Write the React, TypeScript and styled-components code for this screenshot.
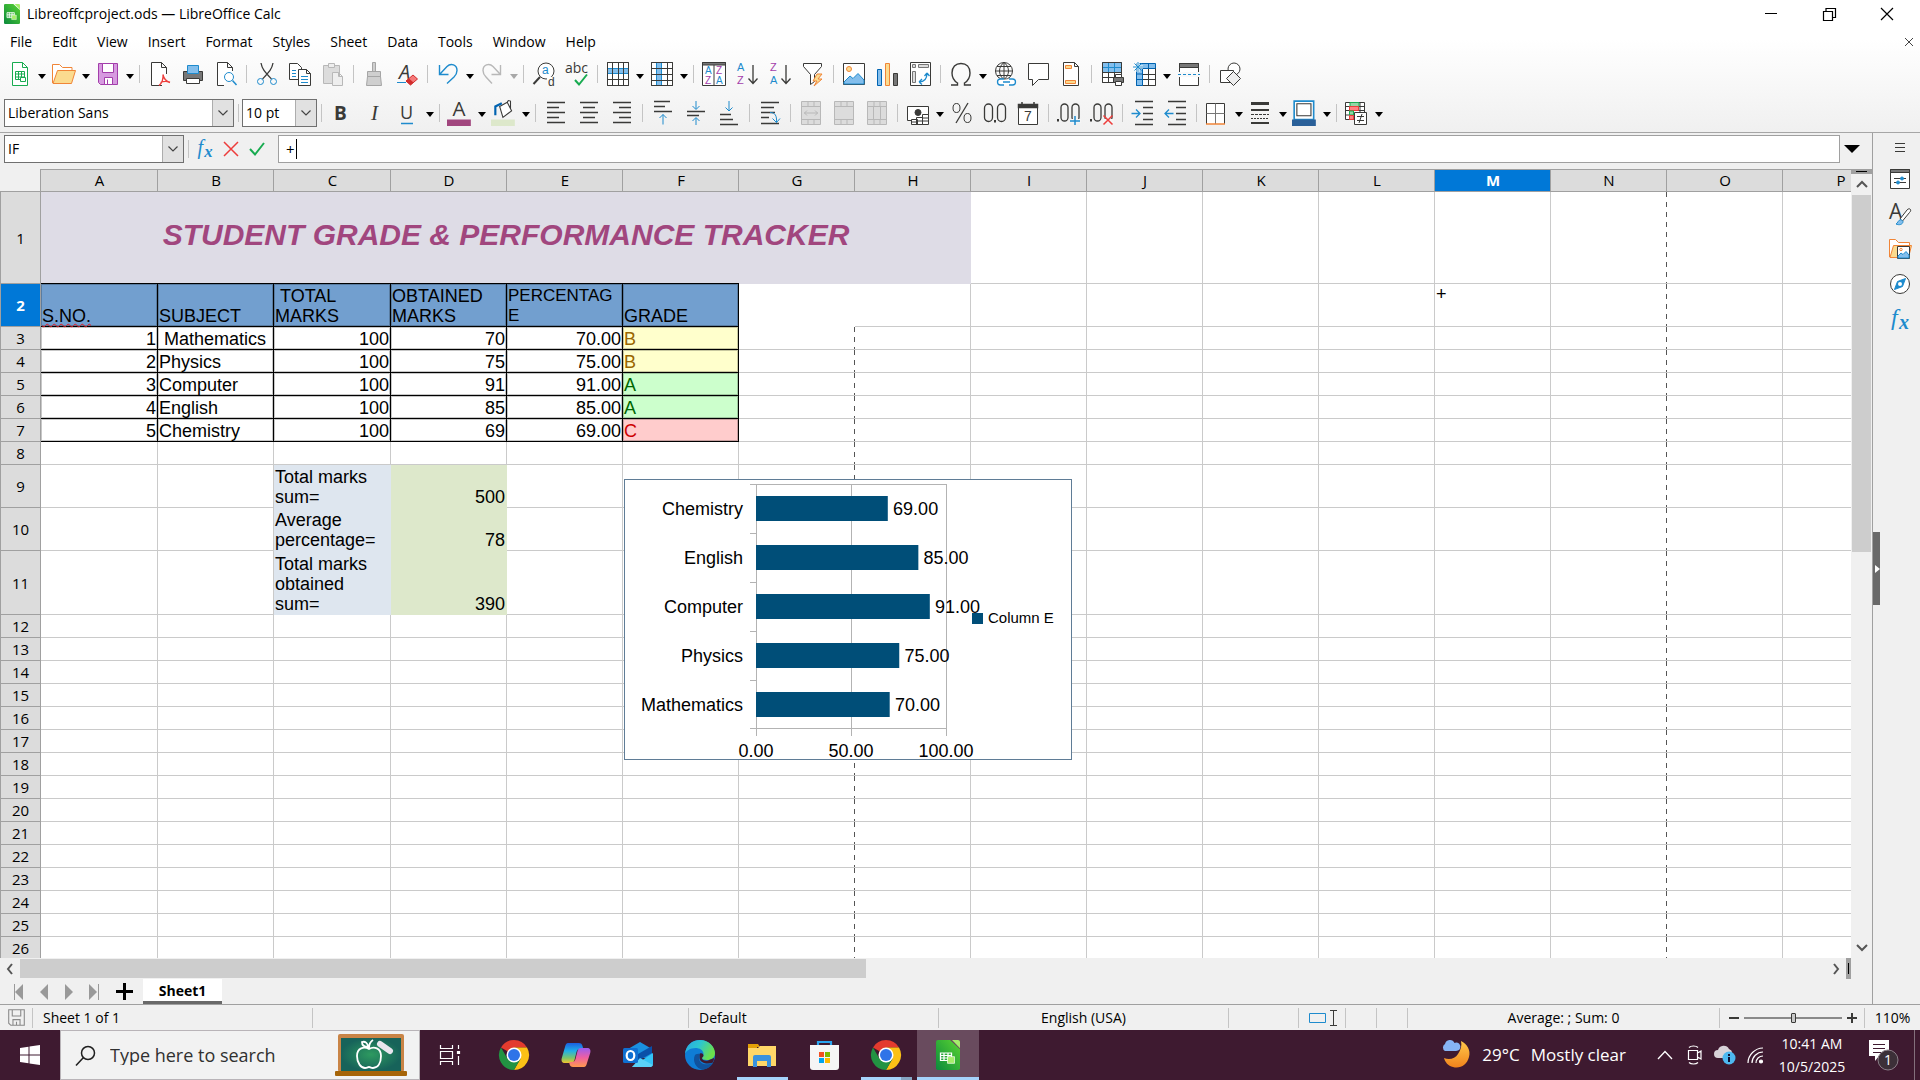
import React from "react";
import styled, { createGlobalStyle, css } from "styled-components";

const UI = `"Open Sans", "Noto Sans", sans-serif`;
const SHEET = `"Liberation Sans", Arial, sans-serif`;

const K = "#3a3a38";
const B = "#1e8bcd";
const G = "#18ab50";
const O = "#f08537";
const Y = "#fbdb8f";
const P = "#a33eab";
const LG = "#b8b8b8";
const RED = "#ed3d3b";

const Global = createGlobalStyle`
  * { box-sizing: border-box; }
  html, body, #root { height: 100%; margin: 0; }
  body { font: 15px/20px ${UI}; color: #000; background: #f0f0f0; overflow: hidden; }
  button { border: 0; padding: 0; margin: 0; background: none; font: inherit; color: inherit; }
  input, select { font: inherit; color: inherit; border: 0; padding: 0; margin: 0; background: none; outline: none; }
  svg { display: block; overflow: visible; }
`;

/* ---------- layout ---------- */
const Page = styled.div`
  height: 100vh;
  display: flex;
  flex-direction: column;
`;
const Top = styled.header`
  flex: none;
  display: flex;
  flex-direction: column;
  background: linear-gradient(#fff 30%, #f0f0f0);
  border-bottom: 1px solid #a6a6a6;
`;
const TitleBar = styled.div`
  height: 28px;
  display: flex;
  align-items: center;
  padding: 0 4px;
  gap: 7px;
`;
const Caption = styled.h1`
  flex: 1;
  margin: 0;
  font-size: 14px;
  font-weight: 400;
`;
const WinButtons = styled.div`
  display: flex;
`;
const WinButton = styled.button`
  width: 58px;
  height: 28px;
  display: grid;
  place-items: center;
`;
const MenuBar = styled.nav`
  height: 27px;
  display: flex;
  align-items: center;
`;
const MenuItem = styled.button`
  padding: 0 10px;
  font-size: 14px;
`;
const CloseDoc = styled.button`
  margin-left: auto;
  width: 22px;
  height: 22px;
  display: grid;
  place-items: center;
`;
const Toolbar = styled.div<{ $format?: boolean }>`
  height: ${(p) => (p.$format ? 39 : 38)}px;
  display: flex;
  align-items: center;
  padding-left: ${(p) => (p.$format ? 4 : 3)}px;
`;
const Tool = styled.button`
  width: 33px;
  height: 32px;
  flex: none;
  display: grid;
  place-items: center;
`;
const DropArrow = styled.button<{ $off?: boolean }>`
  width: 11px;
  height: 32px;
  flex: none;
  display: grid;
  place-items: center;
  padding-top: 4px;
  &::before {
    content: "";
    border: 4px solid transparent;
    border-top: 5px solid ${(p) => (p.$off ? "#a8a8a8" : "#000")};
    border-bottom: 0;
  }
`;
const Divider = styled.span`
  width: 8px;
  flex: none;
  height: 18px;
  background: linear-gradient(#c4c4c4, #c4c4c4) center / 1px 100% no-repeat;
`;
const Combo = styled.label<{ $w: number }>`
  position: relative;
  width: ${(p) => p.$w}px;
  height: 28px;
  flex: none;
  display: flex;
  background: #fff;
  border: 1px solid #707070;
  input {
    flex: 1;
    min-width: 0;
    width: 100%;
    padding-left: 3px;
    font-size: 14px;
  }
`;
const ComboArrow = styled.span`
  width: 21px;
  flex: none;
  display: grid;
  place-items: center;
  background: #e1e1e1;
  border-left: 1px solid #adadad;
`;

const Workspace = styled.div`
  flex: 1;
  min-height: 0;
  display: flex;
`;
const DocArea = styled.main`
  flex: 1;
  min-width: 0;
  display: flex;
  flex-direction: column;
`;
const FormulaBar = styled.div`
  height: 36px;
  flex: none;
  display: flex;
  align-items: center;
  padding: 0 8px 4px 4px;
`;
const FxTools = styled.div`
  display: flex;
  width: 77px;
  justify-content: space-between;
  margin-right: 9px;
`;
const FxButton = styled.button`
  width: 25px;
  height: 26px;
  display: grid;
  place-items: center;
`;
const FormulaField = styled.label`
  flex: 1;
  height: 28px;
  display: flex;
  align-items: center;
  padding-left: 7px;
  background: #fff;
  border: 1px solid #a0a0a0;
  input {
    width: 10px;
    font-size: 15px;
  }
`;
const Caret = styled.span`
  width: 1px;
  height: 20px;
  background: #000;
`;
const Expand = styled.button`
  width: 24px;
  height: 28px;
  display: grid;
  place-items: center;
  &::before {
    content: "";
    border: 8px solid transparent;
    border-top: 8px solid #000;
    border-bottom: 0;
  }
`;

const GridFrame = styled.div`
  flex: 1;
  min-height: 0;
  display: flex;
`;
const GridView = styled.div`
  position: relative;
  flex: 1;
  min-width: 0;
  overflow: hidden;
  background: #fff;
`;
const VScroll = styled.div`
  width: 21px;
  flex: none;
  display: flex;
  flex-direction: column;
  align-items: flex-end;
  background: #f0f0f0;
`;
const SplitHandle = styled.span`
  width: 21px;
  height: 5px;
  display: grid;
  place-items: center;
  background: #a0a0a0;
  &::before {
    content: "";
    width: 11px;
    height: 1px;
    background: #000;
  }
`;
const ScrollArrow = styled.button`
  width: 20px;
  height: 20px;
  flex: none;
  display: grid;
  place-items: center;
`;
const VTrack = styled.div`
  flex: 1;
  width: 20px;
  padding-top: 1px;
`;
const VThumb = styled.div`
  width: 19px;
  height: 48%;
  background: #cdcdcd;
`;
const HScroll = styled.div`
  height: 21px;
  flex: none;
  display: flex;
  align-items: center;
  padding-right: 21px;
`;
const HTrack = styled.div`
  flex: 1;
  height: 19px;
  display: grid;
  grid-template-columns: 846fr 959fr;
`;
const HThumb = styled.div`
  height: 19px;
  background: #cdcdcd;
`;
const HSplit = styled.span`
  width: 5px;
  height: 21px;
  display: grid;
  place-items: center;
  background: #a0a0a0;
  &::before {
    content: "";
    width: 1px;
    height: 11px;
    background: #000;
  }
`;
const TabBar = styled.div`
  height: 25px;
  flex: none;
  display: flex;
  padding-left: 6px;
`;
const TabNav = styled.button`
  width: 25px;
  height: 25px;
  display: grid;
  place-items: center;
`;
const AddTab = styled.button`
  width: 37px;
  height: 25px;
  display: grid;
  place-items: center;
`;
const SheetTab = styled.button`
  width: 79px;
  height: 25px;
  padding-top: 2px;
  background: #fff;
  border-bottom: 3px solid #696969;
  font-size: 14px;
  font-weight: 700;
`;

/* ---------- sidebar ---------- */
const Sidebar = styled.aside`
  width: 48px;
  flex: none;
  display: flex;
  border-left: 1px solid #a0a0a0;
`;
const DeckHandle = styled.button`
  width: 7px;
  height: 73px;
  margin-top: 399px;
  display: grid;
  place-items: center;
  background: #696969;
`;
const DeckButtons = styled.div`
  flex: 1;
  display: flex;
  flex-direction: column;
  align-items: center;
`;
const DeckButton = styled.button`
  width: 34px;
  height: 35px;
  display: grid;
  place-items: center;
  &:first-child {
    height: 28px;
  }
`;

/* ---------- sheet ---------- */
const Sheet = styled.table`
  table-layout: fixed;
  width: 1899px;
  border-spacing: 0;
  font: 18px/20px ${SHEET};
`;
const ColHead = styled.th<{ $active?: boolean }>`
  height: 23px;
  padding: 0 0 1px 1px;
  border: solid #a0a0a0;
  border-width: 1px 1px 1px 0;
  font: ${(p) => (p.$active ? 700 : 400)} 15px/18px ${UI};
  background: ${(p) => (p.$active ? "#0078d7" : "#dcdcdc")};
  color: ${(p) => (p.$active ? "#fff" : "#000")};
`;
const Corner = styled.td`
  padding: 0;
  background: #f0f0f0;
  border: solid #a0a0a0;
  border-width: 0 1px 1px 0;
`;
const RowHead = styled.th<{ $active?: boolean }>`
  padding: 0;
  border: solid #a0a0a0;
  border-width: 0 1px 1px 1px;
  font: ${(p) => (p.$active ? 700 : 400)} 15px/20px ${UI};
  background: ${(p) => (p.$active ? "#0078d7" : "#dcdcdc")};
  color: ${(p) => (p.$active ? "#fff" : "#000")};
`;
const Row = styled.tr<{ $h: number }>`
  height: ${(p) => p.$h}px;
`;
type CellKind = "plain" | "boxed" | "open" | "fill" | "break";
const Cell = styled.td<{
  $kind?: CellKind;
  $bg?: string;
  $fg?: string;
  $right?: boolean;
  $top?: boolean;
  $small?: boolean;
}>`
  padding: 0 1px;
  vertical-align: ${(p) => (p.$top ? "top" : "bottom")};
  text-align: ${(p) => (p.$right ? "right" : "left")};
  white-space: pre-wrap;
  color: ${(p) => p.$fg ?? "#000"};
  background-color: ${(p) => p.$bg ?? "#fff"};
  border: solid #cacaca;
  border-width: 0 1px 1px 0;
  ${(p) => p.$small && css`font-size: 17px;`}
  ${(p) =>
    p.$kind === "boxed" &&
    css`
      border-color: #000;
      box-shadow: inset 0 0 0 1px rgba(0, 0, 0, 0.22);
    `}
  ${(p) => p.$kind === "open" && css`border-color: #fff;`}
  ${(p) => p.$kind === "fill" && css`border-color: ${p.$bg};`}
  ${(p) =>
    p.$kind === "break" &&
    css`
      border-right: 0;
      background: repeating-linear-gradient(#555 0 5px, #fff 5px 10px) right / 1px 100% no-repeat #fff;
    `}
`;
const TopRule = styled(Cell)`
  box-shadow: inset 0 0 0 1px rgba(0, 0, 0, 0.22), 0 -1px 0 #000;
`;
const TitleCell = styled.td`
  padding: 0 0 6px;
  background: #dedce6;
  color: #a1467e;
  text-align: center;
  vertical-align: middle;
  font: italic 700 30px/40px ${SHEET};
  white-space: nowrap;
`;
const Misspelt = styled.span`
  text-decoration: underline wavy #e01b24 1px;
  text-underline-offset: 1px;
`;
const ChartBox = styled.figure`
  position: absolute;
  left: 624px;
  top: 310px;
  margin: 0;
  width: 448px;
  height: 281px;
  background: #fff;
  border: 1px solid #5f7c96;
  font: 18px ${SHEET};
`;

/* ---------- status bar ---------- */
const StatusBar = styled.footer`
  height: 26px;
  flex: none;
  display: grid;
  grid-template-columns: 33px 280fr 376fr 250fr 290fr 70px 47px 31px 31px 312fr 145px 55px;
  align-items: center;
  border-top: 1px solid #a0a0a0;
  font-size: 14px;
`;
const StatusCell = styled.div<{ $center?: boolean }>`
  height: 20px;
  display: flex;
  align-items: center;
  justify-content: ${(p) => (p.$center ? "center" : "flex-start")};
  padding-left: ${(p) => (p.$center ? 0 : 10)}px;
  border-right: 1px solid #c4c4c4;
  white-space: nowrap;
  &:last-child {
    border: 0;
  }
`;
const ZoomCell = styled(StatusCell)`
  padding: 0 4px 0 6px;
`;
const ZoomButton = styled.button`
  width: 16px;
  height: 18px;
  flex: none;
  display: grid;
  place-items: center;
`;
const ZoomRange = styled.input`
  flex: 1;
  min-width: 0;
  margin: 0 2px;
  height: 18px;
  appearance: none;
  background: linear-gradient(#8a8a8a, #8a8a8a) center / 100% 2px no-repeat;
  &::-webkit-slider-thumb {
    appearance: none;
    width: 5px;
    height: 10px;
    border: 1px solid #3a3a38;
    border-radius: 1px;
    background: #c8c8c8;
  }
`;

/* ---------- task bar ---------- */
const TaskBar = styled.footer`
  height: 50px;
  flex: none;
  display: flex;
  background: #3e1a30;
  color: #fff;
`;
const Start = styled.button`
  width: 60px;
  display: grid;
  place-items: center;
`;
const Search = styled.label`
  width: 360px;
  display: flex;
  align-items: center;
  padding: 0 12px 0 14px;
  background: #f2f2f2;
  border: 1px solid #b9b4b8;
  color: #1f1f1f;
  font-size: 18px;
  input {
    flex: 1;
    min-width: 0;
    padding-left: 14px;
  }
  input::placeholder {
    color: #303030;
    opacity: 1;
  }
`;
const Apps = styled.div`
  flex: 1;
  display: flex;
`;
const AppButton = styled.button<{ $state?: "open" | "many" | "active" }>`
  position: relative;
  width: 62px;
  display: grid;
  place-items: center;
  background: ${(p) => (p.$state === "active" ? "#694b5e" : "none")};
  &:first-child {
    width: 63px;
    padding-right: 4px;
  }
  ${(p) =>
    p.$state &&
    css`
      &::after {
        content: "";
        position: absolute;
        left: ${p.$state === "active" ? 0 : 6}px;
        right: ${p.$state === "active" ? 0 : 5}px;
        bottom: 0;
        height: 3px;
        background: ${p.$state === "many" ? "linear-gradient(90deg, #a5d3fb 78%, #86a4c2 78%)" : "#a5d3fb"};
      }
    `}
`;
const Weather = styled.button`
  display: flex;
  align-items: center;
  gap: 11px;
  margin-right: 24px;
  font-size: 17px;
`;
const TrayButton = styled.button`
  width: 30px;
  display: grid;
  place-items: center;
`;
const Clock = styled.time`
  width: 84px;
  display: flex;
  flex-direction: column;
  align-items: center;
  justify-content: center;
  font-size: 14px;
  line-height: 23px;
`;
const Notify = styled.button`
  width: 60px;
  display: grid;
  place-items: center;
`;
const ShowDesktop = styled.button`
  width: 6px;
  border-left: 1px solid #83707c;
`;

/* ---------- icons ---------- */
const Ico = ({ children, s = 24 }: { children: React.ReactNode; s?: number }) => (
  <svg width={s} height={s} viewBox="0 0 24 24" fill="none" stroke={K} aria-hidden="true">
    {children}
  </svg>
);
const Chevron = () => (
  <svg width="12" height="8" viewBox="0 0 12 8" fill="none" stroke="#444" strokeWidth="1.2">
    <path d="M1.500 1.500 6 6l4.500-4.500" />
  </svg>
);
const T = (p: React.SVGProps<SVGTextElement>) => <text stroke="none" fontFamily="Open Sans" {...p} />;
const L = (p: React.SVGProps<SVGTextElement>) => (
  <text stroke="none" fontFamily="Liberation Sans" fontSize="10" {...p} />
);

const mergeGrid = (mid: string) => (
  <Ico>
    <path fill="#dcdcdc" stroke={LG} d="M2.500.5h19v23h-19z" />
    <path stroke={LG} d={"M2.500 5.500h19M2.500 18.500h19M9 .5v5M15 .5v5M9 18.500v5M15 18.500v5" + mid} />
  </Ico>
);

const icons: Record<string, React.ReactNode> = {
  new: (
    <Ico>
      <path fill="#fff" stroke={G} d="M4.500.5h10l5 5v18h-15z" />
      <path stroke={G} d="M14.500.5v5h5" />
      <path fill="#fff" stroke={G} d="M7.500 9.500h9v8h-9zM7.500 12h9M7.500 15h9M10.500 9.500v8M13.500 9.500v8" />
      <path fill="#fff" stroke={G} d="M12.500 15.500h5v4h-5z" />
    </Ico>
  ),
  open: (
    <Ico>
      <path stroke={O} fill="#fff" d="M.5 21V2.500h7l3 3h9.500v3" />
      <path stroke={O} fill={Y} d="M1 21.500 5.500 8.500h18l-4 13z" />
    </Ico>
  ),
  save: (
    <Ico>
      <path stroke={P} fill="#d79ae0" d="M2.500 1.500h19v21h-17l-2-2z" />
      <path stroke={P} fill="#fff" d="M6.500 1.500h11v9h-11zM8.500 15.500h8v7h-8z" />
      <path stroke={P} d="M11.500 17.500v5" />
    </Ico>
  ),
  pdf: (
    <Ico>
      <path fill="#fff" d="M14 23.500H3.500V.5h10l5 5V12M13.500.5v5h5" />
      <path stroke={RED} strokeWidth="1.300" d="M11 23.500c3-2 4.500-7 4-11M15 12.500c1 5 3 7 7 8M12.500 20.500c3-1.500 6-1.500 9.500-.5" />
    </Ico>
  ),
  print: (
    <Ico>
      <path fill="#777" d="M2.500 9.500h19v9h-19z" />
      <path stroke={B} fill="#83beec" d="M6.500 3.500h11v8h-11z" />
      <path fill="#fff" d="M5.500 16.500h13v5h-13z" />
    </Ico>
  ),
  preview: (
    <Ico>
      <path fill="#fff" d="M10 23.500H3.500V.5h10l5 5V9M13.500.5v5h5" />
      <circle cx="15" cy="15" r="4.500" stroke={B} fill="#fff" />
      <path stroke={B} strokeWidth="1.500" d="m18.500 18.500 4 4.500" />
    </Ico>
  ),
  cut: (
    <Ico>
      <path strokeWidth="1.300" d="M6 1c1 6 4 9 10.500 16M18 1c-1 6-4 9-10.500 16" />
      <circle cx="5.500" cy="19.500" r="3" stroke={B} />
      <circle cx="18.500" cy="19.500" r="3" stroke={B} />
    </Ico>
  ),
  copy: (
    <Ico>
      <path fill="#fff" d="M1.500 1.500h8l4 4v12h-12z" />
      <path fill="#fff" d="M10.500 7.500h8l4 4v12h-12zM18.500 7.500v4h4" />
      <path stroke={B} d="M4 8.500h4M4 11.500h4M4 14.500h4M13 14.500h7M13 17.500h7M13 20.500h7" />
    </Ico>
  ),
  paste: (
    <Ico>
      <path stroke={LG} fill="#dcdcdc" d="M2.500 3.500h16v18h-16z" />
      <path stroke={LG} fill="#eee" d="M7.500 1.500h6v4h-6zM11.500 10.500h6l4 4v9h-10zM17.500 10.500v4h4" />
    </Ico>
  ),
  brush: (
    <Ico>
      <path stroke="#a5a5a5" fill="#cfcfcf" d="M10.500.5h3v9h-3zM5.500 9.500h13v5h-13zM5.500 14.500h13l1 9h-15z" />
    </Ico>
  ),
  clear: (
    <Ico>
      <T x="4" y="17" fontSize="20" fontStyle="italic" fill={K}>A</T>
      <path stroke={B} d="M2 20.500h9" />
      <path stroke="#d12c2c" fill="#f57a7a" d="m11 19 7-6 4.500 4-7 6z" />
      <path fill="#d12c2c" stroke="none" d="m11 19 3-2.500 4.500 4-3 2.500z" />
    </Ico>
  ),
  undo: (
    <Ico>
      <path stroke={B} strokeWidth="1.400" d="M3.500 3v9.500h9M4 12 11 4.500c4-4 10-1.500 10 4 0 3-1.500 5-3 6.500l-7 6.500" />
    </Ico>
  ),
  redo: (
    <Ico>
      <path stroke={LG} strokeWidth="1.400" d="M20.500 3v9.500h-9M20 12 13 4.500c-4-4-10-1.500-10 4 0 3 1.500 5 3 6.500l6 6.500" />
    </Ico>
  ),
  find: (
    <Ico>
      <circle cx="14" cy="9" r="8" fill="#fff" />
      <path strokeWidth="2" d="m8 15-6.500 7" />
      <path stroke="#fff" strokeWidth="3" d="M15 16.500h7" />
      <L x="10" y="12" fontSize="12" fill={B}>a</L>
      <L x="16" y="24" fontSize="12" fill={K}>d</L>
    </Ico>
  ),
  spell: (
    <Ico>
      <T x="0" y="11" fontSize="14" fill={K}>abc</T>
      <path stroke={G} strokeWidth="2" d="m10 18 4 4.500 8-10" />
    </Ico>
  ),
  rows: (
    <Ico>
      <path fill="#fff" d="M1.500.5h21v23h-21z" />
      <path fill="#83beec" stroke={B} d="M1.500 6.500h21v5h-21z" />
      <path d="M1.500.5h21v23h-21zM1.500 17.500h21M6.500.5v23M12.500.5v23M17.500.5v23" />
    </Ico>
  ),
  cols: (
    <Ico>
      <path fill="#fff" d="M1.500.5h21v23h-21z" />
      <path fill="#83beec" stroke={B} d="M6.500.5h5v23h-5z" />
      <path d="M1.500.5h21v23h-21zM1.500 6.500h21M1.500 12.500h21M1.500 18.500h21M17.500.5v23" />
    </Ico>
  ),
  sort: (
    <Ico>
      <path fill="#fff" d="M.5.5h23v23H.5zM12 3v20" />
      <path fill="#777" d="M.5.500h23v2.500H.5z" />
      <L x="3" y="12" fill={B}>A</L>
      <L x="3" y="22" fill={P}>Z</L>
      <L x="14" y="12" fill={P}>Z</L>
      <L x="14" y="22" fill={B}>A</L>
    </Ico>
  ),
  az: (
    <Ico>
      <L x="2" y="9" fontSize="11" fill={B}>A</L>
      <L x="2" y="22" fontSize="11" fill={P}>Z</L>
      <path strokeWidth="1.300" d="M18 3v18M13.500 16.500 18 21.500l4.500-5" />
    </Ico>
  ),
  za: (
    <Ico>
      <L x="2" y="9" fontSize="11" fill={P}>Z</L>
      <L x="2" y="22" fontSize="11" fill={B}>A</L>
      <path strokeWidth="1.300" d="M18 3v18M13.500 16.500 18 21.500l4.500-5" />
    </Ico>
  ),
  filter: (
    <Ico>
      <path fill="#fff" d="M2.500 1.500h18v3l-7 8v7l-4 3v-10l-7-8z" />
      <path stroke={O} fill={Y} d="m16 12-4 7h4l-3 5 8-7h-4l4-5z" />
    </Ico>
  ),
  image: (
    <Ico>
      <path fill="#fff" d="M1.500 1.500h21v21h-21z" />
      <circle cx="7" cy="7" r="2.500" stroke={O} fill={Y} />
      <path stroke={B} fill="#83beec" d="m2 20 6-6 3 2.500 5-5 6 6.500v4H2z" />
    </Ico>
  ),
  chart: (
    <Ico>
      <path stroke="#0063b1" fill="#83beec" d="M2.500 7.500h4v16h-4z" />
      <path stroke={O} fill={Y} d="M10.500 1.500h4v22h-4z" />
      <path fill="#777" d="M18.500 11.500h4v12h-4z" />
    </Ico>
  ),
  pivot: (
    <Ico>
      <path fill="#fff" d="M2.500.5h20v23h-20z" />
      <path fill="#ddd" stroke="#777" d="M4.500 2.500h3v3h-3zM10.500 2.500h10v3h-10zM4.500 9.500h3v11h-3z" />
      <path stroke={B} strokeWidth="1.300" d="M11 20c5 0 8-3 8-9M11 20l3-3M11 20l3 2.500M19 11l-2.500 3M19 11l2.500 3" />
    </Ico>
  ),
  omega: (
    <Ico>
      <path strokeWidth="1.400" d="M2 23h6.500v-2C4.500 18.500 3 15.500 3 11 3 5 6.500 1.500 12 1.500S21 5 21 11c0 4.500-1.500 7.500-5.500 10v2H22" />
    </Ico>
  ),
  globe: (
    <Ico>
      <circle cx="11" cy="9" r="8.500" />
      <path d="M11 .5v17M2.500 9h17M4 4.500h14M4 13.500h14M11 .5c-6 4-6 13 0 17M11 .5c6 4 6 13 0 17" />
      <path stroke="#fff" strokeWidth="5" d="M6 20h16" />
      <path stroke={B} fill="#fff" strokeWidth="1.300" d="M11 17H7.500a3 3 0 0 0 0 6H11M16 17h3.500a3 3 0 0 1 0 6H16M10 20h7" />
    </Ico>
  ),
  comment: (
    <Ico>
      <path fill="#fff" d="M2.500 1.500h20v16h-10l-6 6v-6h-4z" />
    </Ico>
  ),
  header: (
    <Ico>
      <path fill="#fff" d="M4.500.5h11l4 4v19h-15zM15.500.5v4h4" />
      <path stroke={O} fill={Y} d="M6.500 3.500h6v3h-6zM6.500 18.500h10v3h-10z" />
    </Ico>
  ),
  printarea: (
    <Ico>
      <path fill="#fff" d="M2.500.5h19v20h-19z" />
      <path fill="#83beec" stroke={B} d="M2.500.500h19v10h-19z" />
      <path d="M2.500.5h19v20h-19zM2.500 10.500h19M2.500 15.500h19M8.500 10.500v10M14.500 10.500v10" />
      <path stroke={B} d="M3 5.500h18M8.500 1v9M14.500 1v9" />
      <path fill="#777" d="M13.500 15.500h10v5h-10z" />
      <path fill="#fff" d="M15.500 12.500h6v3h-6zM15.500 19.500h6v4h-6z" />
    </Ico>
  ),
  freeze: (
    <Ico>
      <path fill="#fff" d="M3.500 3.500h19v20h-19z" />
      <path fill="#83beec" stroke="#0063b1" d="M3.500 1.500h19v5h-19zM3.500 6.500h6v17h-6z" />
      <path d="M9.500 12.500h13M9.500 17.500h13M15.500 6.500v17M22.500 6.500v17" />
      <path stroke="#0063b1" d="M3.500 12h6M3.500 17.500h6M15.500 1.500v5" />
      <path stroke="#fff" strokeWidth="3" d="M5 0v10M0 5h10" />
      <path stroke={B} d="M5 0v10M0 5h10M1.500 1.500l7 7M8.500 1.500l-7 7" />
    </Ico>
  ),
  split: (
    <Ico>
      <path fill="#fff" d="M2.500 10V1.500h19V10M2.500 15v8.500h19V15" />
      <path fill="#777" d="M2.500 1.500h19v4h-19z" />
      <path stroke={B} strokeDasharray="3 2" d="M1 12.500h22" />
    </Ico>
  ),
  shapes: (
    <Ico>
      <circle cx="16" cy="7" r="6" fill="#fff" />
      <path fill="#fff" d="M2.500 8.500h13v12h-13z" />
      <path fill="#eee" d="m15.500 9.500 7 7-7 7-7-7z" />
    </Ico>
  ),
  bold: (
    <Ico>
      <T x="4" y="19" fontSize="19" fontWeight="700" fill={K}>B</T>
    </Ico>
  ),
  italic: (
    <Ico>
      <T x="8" y="19" fontSize="21" fontStyle="italic" fontFamily="Liberation Serif" fill={K}>I</T>
    </Ico>
  ),
  underline: (
    <Ico>
      <T x="4" y="18" fontSize="18" fill={K}>U</T>
      <path stroke={B} strokeWidth="1.500" d="M5 22.500h12" />
    </Ico>
  ),
  fontcolor: (
    <Ico s={26}>
      <T x="5" y="15" fontSize="19" fill={K}>A</T>
      <path fill="#a1467e" stroke="none" d="M0 18h22v6H0z" />
    </Ico>
  ),
  fillcolor: (
    <Ico s={26}>
      <path fill="#dde8cb" stroke="none" d="M0 18h22v6H0z" />
      <path fill="#fff" d="m8 6 7-4 4 8-8 6zM15 2l1-1.500 2 .5v7" />
      <path stroke="#0063b1" strokeWidth="2" d="M4 14V6l6-3" />
    </Ico>
  ),
  alignL: <Ico><path strokeWidth="1.300" d="M3 1.500h18M3 6.500h12M3 11.500h18M3 16.500h12M3 21.500h18" /></Ico>,
  alignC: <Ico><path strokeWidth="1.300" d="M3 1.500h18M6 6.500h12M3 11.500h18M6 16.500h12M3 21.500h18" /></Ico>,
  alignR: <Ico><path strokeWidth="1.300" d="M3 1.500h18M9 6.500h12M3 11.500h18M9 16.500h12M3 21.500h18" /></Ico>,
  top: (
    <Ico>
      <path strokeWidth="1.300" d="M3 .5h16M3 5.500h11M3 10.500h18" />
      <path stroke={B} d="M12 23.500v-10M8.500 17l3.500-3.500 3.500 3.500" />
    </Ico>
  ),
  middle: (
    <Ico>
      <path strokeWidth="1.300" d="M3 10.500h18M3 14.500h12" />
      <path stroke={B} d="M12 0v8M8.500 5 12 8.500 15.500 5M12 24v-7M8.500 20l3.500-3.500 3.500 3.500" />
    </Ico>
  ),
  bottom: (
    <Ico>
      <path strokeWidth="1.300" d="M3 13.500h11M3 18.500h13M3 23.500h18" />
      <path stroke={B} d="M12 0v9.500M8.500 6.500 12 10l3.500-3.500" />
    </Ico>
  ),
  wrap: (
    <Ico>
      <path strokeWidth="1.300" d="M3 1.500h18M3 6.500h13M3 11.500h14M3 16.500h8M3 22.500h18" />
      <path stroke={B} d="M12 11.500c5 0 7 3 6.500 10M14.500 17.500l4 4 3.500-4" />
    </Ico>
  ),
  merge1: mergeGrid("M5 12h14M8 9.500 5.500 12 8 14.500M16 9.500l2.500 2.500-2.500 2.500"),
  merge2: mergeGrid(""),
  merge3: mergeGrid("M8.500 5.500v13M15.500 5.500v13"),
  currency: (
    <Ico>
      <path fill="#fff" d="M1.500 5.500h21v14h-21z" />
      <circle cx="12" cy="11.500" r="3" fill={K} />
      <path fill="#fff" d="M5.500 18.500h6v5h-6zM10.500 16.500h6v7h-6zM16.500 13.500h6v10h-6zM5.500 21h6M10.500 20h6M16.500 17h6M16.500 20h6" />
    </Ico>
  ),
  percent: (
    <Ico>
      <ellipse cx="6.500" cy="7" rx="3.500" ry="4.500" />
      <ellipse cx="17.500" cy="17" rx="3.500" ry="4.500" />
      <path strokeWidth="1.300" d="m18 2-12 20" />
    </Ico>
  ),
  decimal: (
    <Ico>
      <rect x="1.500" y="3" width="8" height="17.500" rx="4" strokeWidth="1.300" />
      <rect x="14.500" y="3" width="8" height="17.500" rx="4" strokeWidth="1.300" />
      <path strokeWidth="2" d="M12 19v2.500" />
    </Ico>
  ),
  date: (
    <Ico>
      <path fill="#fff" d="M2.500 3.500h19v20h-19z" />
      <path fill={K} d="M2.500 3.500h19v3h-19zM6 1v3M18 1v3" strokeWidth="1.500" />
      <L x="8" y="20" fontSize="14" fill={K}>7</L>
    </Ico>
  ),
  addDec: (
    <Ico>
      <path strokeWidth="2" d="M1 18v2.500" />
      <rect x="4" y="3" width="7" height="17" rx="3.500" strokeWidth="1.300" />
      <rect x="15" y="3" width="7" height="17" rx="3.500" strokeWidth="1.300" />
      <path stroke="#f5f5f5" strokeWidth="4" d="M13 20h11" />
      <path stroke={B} strokeWidth="1.500" d="M13 20h10M18 15v9" />
    </Ico>
  ),
  delDec: (
    <Ico>
      <path strokeWidth="2" d="M1 18v2.500" />
      <rect x="4" y="3" width="7" height="17" rx="3.500" strokeWidth="1.300" />
      <rect x="15" y="3" width="7" height="17" rx="3.500" strokeWidth="1.300" />
      <path stroke="#f5f5f5" strokeWidth="4" d="M13 20h11" />
      <path stroke={RED} strokeWidth="1.500" d="m13.500 14.500 9 9M22.500 14.500l-9 9" />
    </Ico>
  ),
  indent: (
    <Ico>
      <path strokeWidth="1.300" d="M4 .5h18M12 6.500h10M12 12.500h10M12 18.500h10M4 23.500h18" />
      <path stroke={B} strokeWidth="1.300" d="M.5 12.500h8M5 8.500l4 4-4 4" />
    </Ico>
  ),
  outdent: (
    <Ico>
      <path strokeWidth="1.300" d="M4 .5h18M12 6.500h10M12 12.500h10M12 18.500h10M4 23.500h18" />
      <path stroke={B} strokeWidth="1.300" d="M9.500 12.500h-8M5 8.500l-4 4 4 4" />
    </Ico>
  ),
  borders: (
    <Ico>
      <path fill="#fff" d="M1.500 23V2.500h18V23" />
      <path stroke="#777" d="M10.500 2.500V23M1.500 12.500h18" />
      <path stroke={O} strokeWidth="1.500" d="M1 23h19" />
    </Ico>
  ),
  lines: (
    <Ico>
      <path strokeWidth="3" d="M2 2.500h18" />
      <path strokeWidth="2" d="M2 9h18M2 22h18" />
      <path strokeDasharray="3 1" d="M2 13.500h18" />
      <path strokeDasharray="2 1" d="M2 17.500h18" />
    </Ico>
  ),
  linecolor: (
    <Ico s={26}>
      <path stroke={B} strokeWidth="1.500" fill="#fff" d="M2 1h18v17H2z" />
      <path d="M4.500 3.500h13v11h-13z" />
      <path fill="#2a6099" stroke="none" d="M0 18h22v6H0z" />
    </Ico>
  ),
  cond: (
    <Ico>
      <path fill="#fff" d="M.5 1.500h19v17H.5zM.5 5.500h19M.5 9.500h19M.5 14h19M15 1.500v17" />
      <path fill="#93d6a6" stroke={G} d="M5 1.500h9v4H5z" />
      <path fill="#ff8080" stroke={RED} d="M4.500 5.500h9v4h-9z" />
      <path fill="#93d6a6" stroke={G} d="M4.500 10h4v4h-4z" />
      <path fill="#ff8080" stroke={RED} d="M4.500 14.500h4v4h-4z" />
      <path fill="#fff" d="M9.500 11.500h12v12h-12zM12 15.500h7M12 19.500h7M17 13l-3 9" />
    </Ico>
  ),
};

type Item = [string, string, ("drop" | "off")?] | "|";
const standard: Item[] = [
  ["new", "New", "drop"], ["open", "Open", "drop"], ["save", "Save", "drop"], "|",
  ["pdf", "Export as PDF"], ["print", "Print"], ["preview", "Print Preview"], "|",
  ["cut", "Cut"], ["copy", "Copy"], ["paste", "Paste"], "|",
  ["brush", "Clone Formatting"], ["clear", "Clear Formatting"], "|",
  ["undo", "Undo", "drop"], ["redo", "Redo", "off"], "|",
  ["find", "Find and Replace"], ["spell", "Spelling"], "|",
  ["rows", "Row", "drop"], ["cols", "Column", "drop"], "|",
  ["sort", "Sort"], ["az", "Sort Ascending"], ["za", "Sort Descending"], ["filter", "AutoFilter"], "|",
  ["image", "Insert Image"], ["chart", "Insert Chart"], ["pivot", "Pivot Table"], "|",
  ["omega", "Special Character", "drop"], ["globe", "Hyperlink"], ["comment", "Comment"], ["header", "Headers and Footers"], "|",
  ["printarea", "Define Print Area"], ["freeze", "Freeze Panes", "drop"], ["split", "Split Window"], "|",
  ["shapes", "Draw Functions"],
];
const formatting: Item[] = [
  "|", ["bold", "Bold"], ["italic", "Italic"], ["underline", "Underline", "drop"], "|",
  ["fontcolor", "Font Color", "drop"], ["fillcolor", "Background Color", "drop"], "|",
  ["alignL", "Align Left"], ["alignC", "Center"], ["alignR", "Align Right"], "|",
  ["top", "Align Top"], ["middle", "Center Vertically"], ["bottom", "Align Bottom"], "|",
  ["wrap", "Wrap Text"], "|",
  ["merge1", "Merge and Center"], ["merge2", "Merge Cells"], ["merge3", "Unmerge Cells"], "|",
  ["currency", "Currency", "drop"], ["percent", "Percent"], ["decimal", "Number"], ["date", "Date"], "|",
  ["addDec", "Add Decimal"], ["delDec", "Delete Decimal"], "|",
  ["indent", "Increase Indent"], ["outdent", "Decrease Indent"], "|",
  ["borders", "Borders", "drop"], ["lines", "Border Style", "drop"], ["linecolor", "Border Color", "drop"], "|",
  ["cond", "Conditional", "drop"],
];
const Tools = ({ items }: { items: Item[] }) => (
  <>
    {items.map((it, i) =>
      it === "|" ? (
        <Divider key={i} />
      ) : (
        <React.Fragment key={i}>
          <Tool aria-label={it[1]}>{icons[it[0]]}</Tool>
          {it[2] && <DropArrow aria-label={it[1] + " options"} $off={it[2] === "off"} />}
        </React.Fragment>
      )
    )}
  </>
);

const CalcIcon = ({ w, h }: { w: number; h: number }) => (
  <svg width={w} height={h} viewBox="0 0 24 36" preserveAspectRatio="none" aria-hidden="true">
    <defs>
      <linearGradient id="calc" x1="0" y1="1" x2="1" y2="0">
        <stop offset="0" stopColor="#0b8a3c" />
        <stop offset="1" stopColor="#5ad432" />
      </linearGradient>
    </defs>
    <path fill="url(#calc)" d="M2 0h12l10 11v23a2 2 0 0 1-2 2H2a2 2 0 0 1-2-2V2a2 2 0 0 1 2-2z" />
    <path fill="#a5ee6b" d="M16 0h6a2 2 0 0 1 2 2v8z" />
    <path fill="none" stroke="#fff" strokeWidth="1.300" d="M4.500 15.500h11v9h-11zM4.500 18.500h11M4.500 21.500h11M8 15.500v9M12 15.500v9" />
    <path fill="#a5ee6b" stroke="#fff" strokeWidth=".7" d="M11.500 20h7v8h-7z" />
  </svg>
);
const FxIcon = ({ s }: { s: number }) => (
  <Ico s={s}>
    <T x="3" y="18" fontSize="24" fontStyle="italic" fontFamily="Liberation Serif" fill={B}>f</T>
    <T x="11" y="22" fontSize="20" fontWeight="700" fontStyle="italic" fontFamily="Liberation Serif" fill={B}>x</T>
  </Ico>
);

/* ---------- sheet data ---------- */
const COLS = "ABCDEFGHIJKLMNOP".split("");
const WIDTHS: Record<string, number> = { A: 117, C: 117 };
const BLUE = "#729fcf";
const subjects: [string, string, string, string, string][] = [
  ["1", " Mathematics", "70", "70.00", "B"],
  ["2", "Physics", "75", "75.00", "B"],
  ["3", "Computer", "91", "91.00", "A"],
  ["4", "English", "85", "85.00", "A"],
  ["5", "Chemistry", "69", "69.00", "C"],
];
const gradeStyle: Record<string, [string, string]> = {
  A: ["#ccffcc", "#006600"],
  B: ["#ffffcc", "#996600"],
  C: ["#ffcccc", "#cc0000"],
};
const totals: [number, string, string, number][] = [
  [9, "Total marks\nsum=", "500", 43],
  [10, "Average\npercentage=", "78", 43],
  [11, "Total marks\nobtained\nsum=", "390", 64],
];
const blanks = (from: number, to: number) =>
  COLS.slice(from, to).map((c) => <Cell key={c} $kind={c === "G" || c === "N" ? "break" : "plain"} />);

const chartData: [string, number][] = [
  ["Chemistry", 69],
  ["English", 85],
  ["Computer", 91],
  ["Physics", 75],
  ["Mathematics", 70],
];
const Chart = () => (
  <ChartBox>
    <svg width="446" height="279" viewBox="0 0 446 279" aria-label="Percentage by subject">
      <g stroke="#b3b3b3" fill="none" shapeRendering="crispEdges">
        <path d="M226.500 4.500V256M124.500 4.500h197V256M131.500 4.500V256M124.500 248.500h197" />
        {[53, 102, 151, 200].map((y) => (
          <path key={y} d={`M124.500 ${y}.5h7`} />
        ))}
      </g>
      {chartData.map(([name, v], i) => (
        <g key={name}>
          <rect x="131" y={16 + i * 49} width={v * 1.91} height="25" fill="#004e78" />
          <text x="118" y={35 + i * 49} textAnchor="end">{name}</text>
          <text x={137 + v * 1.9} y={35 + i * 49}>{v.toFixed(2)}</text>
        </g>
      ))}
      {["0.00", "50.00", "100.00"].map((t, i) => (
        <text key={t} x={131 + i * 95} y="277" textAnchor="middle">{t}</text>
      ))}
      <rect x="347" y="133" width="11" height="11" fill="#004e78" />
      <text x="363" y="143" fontSize="15">Column E</text>
    </svg>
  </ChartBox>
);

const Spreadsheet = () => (
  <Sheet>
    <colgroup>
      <col width={41} />
      {COLS.map((c) => (
        <col key={c} width={WIDTHS[c] ?? 116} />
      ))}
    </colgroup>
    <thead>
      <tr>
        <Corner />
        {COLS.map((c) => (
          <ColHead key={c} scope="col" $active={c === "M"}>{c}</ColHead>
        ))}
      </tr>
    </thead>
    <tbody>
      <Row $h={92}>
        <RowHead scope="row">1</RowHead>
        <TitleCell colSpan={8}>STUDENT GRADE &amp; PERFORMANCE TRACKER</TitleCell>
        {blanks(8, 16)}
      </Row>
      <Row $h={43}>
        <RowHead scope="row" $active>2</RowHead>
        <TopRule $kind="boxed" $bg={BLUE}><Misspelt>S.NO.</Misspelt></TopRule>
        <TopRule $kind="boxed" $bg={BLUE}>SUBJECT</TopRule>
        <TopRule $kind="boxed" $bg={BLUE}>{" TOTAL\nMARKS"}</TopRule>
        <TopRule $kind="boxed" $bg={BLUE}>{"OBTAINED\nMARKS"}</TopRule>
        <TopRule $kind="boxed" $bg={BLUE} $small>{"PERCENTAG\nE"}</TopRule>
        <TopRule $kind="boxed" $bg={BLUE}>GRADE</TopRule>
        <Cell $kind="open" />
        {blanks(7, 12)}
        <Cell $top>+</Cell>
        {blanks(13, 16)}
      </Row>
      {subjects.map(([n, name, got, pct, grade], i) => (
        <Row key={n} $h={23}>
          <RowHead scope="row">{i + 3}</RowHead>
          <Cell $kind="boxed" $right>{n}</Cell>
          <Cell $kind="boxed">{name}</Cell>
          <Cell $kind="boxed" $right>100</Cell>
          <Cell $kind="boxed" $right>{got}</Cell>
          <Cell $kind="boxed" $right>{pct}</Cell>
          <Cell $kind="boxed" $bg={gradeStyle[grade][0]} $fg={gradeStyle[grade][1]}>{grade}</Cell>
          {blanks(6, 16)}
        </Row>
      ))}
      <Row $h={23}>
        <RowHead scope="row">8</RowHead>
        {blanks(0, 16)}
      </Row>
      {totals.map(([n, label, value, h]) => (
        <Row key={n} $h={h}>
          <RowHead scope="row">{n}</RowHead>
          {blanks(0, 2)}
          <Cell $kind="fill" $bg="#dee6ef">{label}</Cell>
          <Cell $kind="fill" $bg="#dde8cb" $right>{value}</Cell>
          {blanks(4, 16)}
        </Row>
      ))}
      {Array.from({ length: 15 }, (_, i) => (
        <Row key={i} $h={23}>
          <RowHead scope="row">{i + 12}</RowHead>
          {blanks(0, 16)}
        </Row>
      ))}
    </tbody>
  </Sheet>
);

/* ---------- task bar pictures ---------- */
const Chrome = () => (
  <svg width="30" height="30" viewBox="0 0 30 30" aria-hidden="true">
    <path fill="#e33b2e" d="M15 15 2 7.500A15 15 0 0 1 28 7.500H15z" />
    <path fill="#fbc116" d="M15 7.500h13A15 15 0 0 1 15 30l6.500-11.300z" />
    <path fill="#229342" d="M2 7.500A15 15 0 0 0 15 30l6.500-11.300L15 15 8.500 18.700z" />
    <circle cx="15" cy="15" r="7.500" fill="#fff" />
    <circle cx="15" cy="15" r="6" fill="#2f74e8" />
  </svg>
);
const Copilot = () => (
  <svg width="30" height="28" viewBox="0 0 30 28" aria-hidden="true">
    <defs>
      <linearGradient id="cpa" x1="0" y1="0" x2="0" y2="1">
        <stop offset="0" stopColor="#1b5fe0" />
        <stop offset=".4" stopColor="#20b0e8" />
        <stop offset=".75" stopColor="#7cc56a" />
        <stop offset="1" stopColor="#f3c42c" />
      </linearGradient>
      <linearGradient id="cpb" x1="0" y1="0" x2="0" y2="1">
        <stop offset="0" stopColor="#9c5cf0" />
        <stop offset=".5" stopColor="#ee5fa2" />
        <stop offset="1" stopColor="#ff9a4c" />
      </linearGradient>
    </defs>
    <path fill="url(#cpa)" d="M7 2h11c2 0 3 1 3.500 3l.8 3H19c-2 0-3 1-3.500 3l-2 8c-.6 2-1.500 3-3.500 3H4c-3 0-4-2-3.200-5L4 6c.6-2.500 1.500-4 3-4z" />
    <path fill="url(#cpb)" d="M23 26H12c-2 0-3-1-3.500-3l-.3-2H11c2 0 3-1 3.500-3l2-8c.6-2 1.500-3 3.500-3h6c3 0 4 2 3.200 5L26 22c-.6 2.500-1.500 4-3 4z" />
  </svg>
);
const Outlook = () => (
  <svg width="32" height="28" viewBox="0 0 32 28" aria-hidden="true">
    <path fill="#1a90e0" d="M6 8 18 1l12 7v9H6z" />
    <path fill="#34c3f5" d="m10 26 21-14v11a3 3 0 0 1-3 3z" />
    <path fill="#0a4fa8" d="m16 13 14-8v7L16 20z" />
    <path fill="#5ad2f8" d="m10 26 8-9 13 7-2 2z" />
    <rect x="1" y="7" width="15" height="15" rx="1.500" fill="#0f6fd1" />
    <ellipse cx="8.500" cy="14.500" rx="3.800" ry="4.500" fill="none" stroke="#fff" strokeWidth="2.200" />
  </svg>
);
const Edge = () => (
  <svg width="30" height="30" viewBox="0 0 30 30" aria-hidden="true">
    <defs>
      <linearGradient id="edg" x1="0" y1="0" x2="1" y2=".4">
        <stop offset="0" stopColor="#2aa5e6" />
        <stop offset=".5" stopColor="#2cc6d0" />
        <stop offset="1" stopColor="#6be04c" />
      </linearGradient>
    </defs>
    <circle cx="15" cy="15" r="15" fill="#0f7dd6" />
    <path fill="url(#edg)" d="M0 14C1 5 7 0 15 0c9 0 15 7 15 13 0 5-4 7-8 7-3 0-5-1-5-2 0-1 1.500-1 1.500-4 0-4-4-6-8-6C5 8 1 11 0 14z" />
    <path fill="#10529d" d="M10 15c-3 6 1 14 8 14.700 5-.7 9-4 10-7-6 3-14 2-14-5 0-2 .5-3 1-4-2 0-4 0-5 1.300z" />
    <path fill="#3e1a30" d="M15 13.500c2-1 3.500.5 3.500 2 0 1.500-1.500 1.700-1.500 2.800 0 1.700 3 3 6 2.200l6-2.500c0 3-1 4-1.500 4.700-5 2-13 .3-13-5 0-2 0-3 .5-4.200z" />
  </svg>
);
const Explorer = () => (
  <svg width="28" height="24" viewBox="0 0 28 24" aria-hidden="true">
    <path fill="#e3a008" d="M0 1h10l2 3h-3v4H0z" />
    <path fill="#ffd768" d="M0 5h10l2-2h16v20H0z" />
    <path fill="#3a92dd" d="M5 24V14a2 2 0 0 1 2-2h14a2 2 0 0 1 2 2v10h-4v-6H9v6z" />
  </svg>
);
const Store = () => (
  <svg width="29" height="30" viewBox="0 0 29 30" aria-hidden="true">
    <path fill="none" stroke="#2aa5f0" strokeWidth="2.200" d="M8 7V2h13v5" />
    <path fill="#f5f5f5" d="M0 5h29v22a3 3 0 0 1-3 3H3a3 3 0 0 1-3-3z" />
    <path fill="#f25022" d="M9 12h5v5H9z" />
    <path fill="#7fba00" d="M15 12h5v5h-5z" />
    <path fill="#00a4ef" d="M9 18h5v5H9z" />
    <path fill="#ffb900" d="M15 18h5v5h-5z" />
  </svg>
);
const Board = () => (
  <svg width="72" height="42" viewBox="0 0 72 42" aria-hidden="true">
    <defs>
      <radialGradient id="bd">
        <stop offset="0" stopColor="#2e9a60" />
        <stop offset="1" stopColor="#17635a" />
      </radialGradient>
    </defs>
    <rect x="3" y="0" width="66" height="38" rx="2" fill="#c98446" />
    <rect x="6" y="4" width="60" height="33" fill="url(#bd)" />
    <rect x="0" y="37" width="72" height="5" rx="1" fill="#a66408" />
    <path fill="none" stroke="#fff" strokeWidth="1.800" d="M34 15c-5-3-12-1-12 7 0 7 4 12 8 12 2 0 3-1 4-1s2 1 4 1c5 0 8-5 8-12 0-8-7-10-12-7zM34 14c0-3 1-6 4-8M33 13c-4 0-6-2-6-5 3-1 6 1 6 5z" />
    <path stroke="#e8e4ee" strokeWidth="6" strokeLinecap="round" d="m45 10 10 7" />
  </svg>
);
const Moon = () => (
  <svg width="30" height="34" viewBox="0 0 30 34" aria-hidden="true">
    <defs>
      <linearGradient id="mn" x1="0" y1="0" x2="0" y2="1">
        <stop offset="0" stopColor="#ffc84a" />
        <stop offset="1" stopColor="#f0831c" />
      </linearGradient>
    </defs>
    <path fill="url(#mn)" d="M20 3c6 3 10 9 8 16-2 8-9 12-16 10-5-1-8-5-9-9 5 2 11 1 14-4 3-4 4-9 3-13z" />
    <path fill="#86b4f4" d="M4 13a4 4 0 0 1 0-7 5 5 0 0 1 9.500-1A4 4 0 0 1 17 12.500L15 13z" />
  </svg>
);

export default function App() {
  return (
    <Page>
      <Global />
      <Top>
        <TitleBar>
          <CalcIcon w={16} h={20} />
          <Caption>Libreoffcproject.ods — LibreOffice Calc</Caption>
          <WinButtons>
            <WinButton aria-label="Minimize">
              <svg width="12" height="12" stroke="#000"><path d="M0 5.500h12" /></svg>
            </WinButton>
            <WinButton aria-label="Restore">
              <svg width="13" height="13" fill="none" stroke="#000" strokeWidth="1.200"><path d="M.5 3.500h9v9h-9zM3 3.500v-3h9.500v9h-3" /></svg>
            </WinButton>
            <WinButton aria-label="Close">
              <svg width="12" height="12" stroke="#000" strokeWidth="1.200"><path d="m0 0 12 12M12 0 0 12" /></svg>
            </WinButton>
          </WinButtons>
        </TitleBar>
        <MenuBar>
          {["File", "Edit", "View", "Insert", "Format", "Styles", "Sheet", "Data", "Tools", "Window", "Help"].map((m) => (
            <MenuItem key={m}>{m}</MenuItem>
          ))}
          <CloseDoc aria-label="Close document">
            <svg width="8" height="8" stroke="#444"><path d="m0 0 8 8M8 0 0 8" /></svg>
          </CloseDoc>
        </MenuBar>
        <Toolbar>
          <Tools items={standard} />
        </Toolbar>
        <Toolbar $format>
          <Combo $w={230}>
            <input aria-label="Font name" defaultValue="Liberation Sans" />
            <ComboArrow><Chevron /></ComboArrow>
          </Combo>
          <Divider />
          <Combo $w={75}>
            <input aria-label="Font size" defaultValue="10 pt" />
            <ComboArrow><Chevron /></ComboArrow>
          </Combo>
          <Tools items={formatting} />
        </Toolbar>
      </Top>

      <Workspace>
        <DocArea>
          <FormulaBar>
            <Combo $w={180}>
              <input aria-label="Name box" defaultValue="IF" />
              <ComboArrow><Chevron /></ComboArrow>
            </Combo>
            <Divider />
            <FxTools>
              <FxButton aria-label="Function Wizard"><FxIcon s={20} /></FxButton>
              <FxButton aria-label="Cancel">
                <svg width="14" height="14" stroke={RED} strokeWidth="1.500"><path d="m0 0 14 14M14 0 0 14" /></svg>
              </FxButton>
              <FxButton aria-label="Accept">
                <svg width="14" height="12" fill="none" stroke={G} strokeWidth="2"><path d="m0 6 5 5.500L14 0" /></svg>
              </FxButton>
            </FxTools>
            <FormulaField>
              <input aria-label="Input line" defaultValue="+" />
              <Caret />
            </FormulaField>
            <Expand aria-label="Expand formula bar" />
          </FormulaBar>
          <GridFrame>
            <GridView>
              <Spreadsheet />
              <Chart />
            </GridView>
            <VScroll>
              <SplitHandle />
              <ScrollArrow aria-label="Scroll up">
                <svg width="12" height="8" fill="none" stroke="#555" strokeWidth="2"><path d="m1 7 5-5 5 5" /></svg>
              </ScrollArrow>
              <VTrack><VThumb /></VTrack>
              <ScrollArrow aria-label="Scroll down">
                <svg width="12" height="8" fill="none" stroke="#555" strokeWidth="2"><path d="m1 1 5 5 5-5" /></svg>
              </ScrollArrow>
            </VScroll>
          </GridFrame>
          <HScroll>
            <ScrollArrow aria-label="Scroll left">
              <svg width="8" height="12" fill="none" stroke="#555" strokeWidth="2"><path d="M6 1 2 6l4 5" /></svg>
            </ScrollArrow>
            <HTrack><HThumb /></HTrack>
            <ScrollArrow aria-label="Scroll right">
              <svg width="8" height="12" fill="none" stroke="#555" strokeWidth="2"><path d="m2 1 4 5-4 5" /></svg>
            </ScrollArrow>
            <HSplit />
          </HScroll>
          <TabBar>
            <TabNav aria-label="First sheet"><svg width="10" height="16" fill="#999"><path d="M0 0h1v16H0zM9 0v16L1 8z" /></svg></TabNav>
            <TabNav aria-label="Previous sheet"><svg width="8" height="16" fill="#999"><path d="M8 0v16L0 8z" /></svg></TabNav>
            <TabNav aria-label="Next sheet"><svg width="8" height="16" fill="#999"><path d="M0 0v16l8-8z" /></svg></TabNav>
            <TabNav aria-label="Last sheet"><svg width="10" height="16" fill="#999"><path d="M0 0v16l8-8zM9 0h1v16H9z" /></svg></TabNav>
            <AddTab aria-label="Add sheet"><svg width="17" height="17" fill="#000"><path d="M7 0h3v7h7v3h-7v7H7v-7H0V7h7z" /></svg></AddTab>
            <SheetTab>Sheet1</SheetTab>
          </TabBar>
        </DocArea>
        <Sidebar>
          <DeckHandle aria-label="Show sidebar deck">
            <svg width="6" height="8" fill="#fff"><path d="M1 0v8l5-4z" /></svg>
          </DeckHandle>
          <DeckButtons>
            <DeckButton aria-label="Sidebar settings">
              <svg width="10" height="9" stroke={K}><path d="M0 .5h10M0 4.500h10M0 8.500h10" /></svg>
            </DeckButton>
            <DeckButton aria-label="Properties">
              <Ico>
                <path fill="#fff" d="M2.500 2.500h19v19h-19z" />
                <path fill="#777" d="M2.500 2.500h19v3h-19z" />
                <path d="M6 11.500h12M6 15.500h12" />
                <circle cx="14" cy="11.500" r="1.500" fill={B} stroke={B} />
                <circle cx="10" cy="15.500" r="1.500" fill={B} stroke={B} />
              </Ico>
            </DeckButton>
            <DeckButton aria-label="Styles">
              <Ico>
                <T x="1" y="17" fontSize="21" fill={K}>A</T>
                <path fill="#fff" d="m12 17 7-9c1-1.500 3-1.500 3.500-.5s0 2-1 3l-7 8.500z" />
                <path stroke={B} fill="#83beec" d="M8 22c2-1 2-4 5-4.500l2 2c0 3-4 4-7 2.500z" />
              </Ico>
            </DeckButton>
            <DeckButton aria-label="Gallery">
              <Ico>
                <path stroke={O} fill="#fff" d="M1.500 20V2.500h6l3 3h11v3" />
                <path stroke={O} fill={Y} d="M2 20.500 5.500 8.500h18l-3 12z" />
                <path fill="#fff" d="M9.500 9.500h12v12h-12z" />
                <circle cx="13" cy="12.500" r="1.200" stroke={O} />
                <path stroke={B} fill="#83beec" d="m10 19 3-3 2 1.500 3-3 3 3.500v3H10z" />
              </Ico>
            </DeckButton>
            <DeckButton aria-label="Navigator">
              <Ico>
                <circle cx="12" cy="12" r="9.500" fill="#fff" />
                <path fill={B} stroke={B} d="m17.500 6.500-3 8-8 3 3-8z" />
                <circle cx="12" cy="12" r="2" fill="#fff" stroke="none" />
              </Ico>
            </DeckButton>
            <DeckButton aria-label="Functions"><FxIcon s={24} /></DeckButton>
          </DeckButtons>
        </Sidebar>
      </Workspace>

      <StatusBar>
        <StatusCell $center>
          <Ico s={17}><path stroke="#888" strokeWidth="1.500" d="M1 1h22v22H4l-3-3zM6 1h12v9H6zM7 23v-8h10v8M12 18v5" /></Ico>
        </StatusCell>
        <StatusCell>Sheet 1 of 1</StatusCell>
        <StatusCell />
        <StatusCell>Default</StatusCell>
        <StatusCell $center>English (USA)</StatusCell>
        <StatusCell />
        <StatusCell>
          <svg width="28" height="16" fill="none" aria-hidden="true">
            <path stroke={B} d="M.5 3.500h16v9H.5z" />
            <path stroke={K} d="M21 .5h7M21 15.500h7M24.500.5v15" />
          </svg>
        </StatusCell>
        <StatusCell />
        <StatusCell />
        <StatusCell $center>Average: ; Sum: 0</StatusCell>
        <ZoomCell>
          <ZoomButton aria-label="Zoom out"><svg width="10" height="10"><path fill={K} d="M0 4h10v2H0z" /></svg></ZoomButton>
          <ZoomRange type="range" aria-label="Zoom" min={20} max={200} defaultValue={110} />
          <ZoomButton aria-label="Zoom in"><svg width="10" height="10"><path fill={K} d="M0 4h4V0h2v4h4v2H6v4H4V6H0z" /></svg></ZoomButton>
        </ZoomCell>
        <StatusCell $center>110%</StatusCell>
      </StatusBar>

      <TaskBar>
        <Start aria-label="Start">
          <svg width="20" height="20" fill="#fff"><path d="M0 3l8.500-1.200v7.700H0zM9.500 1.600 20 0v9.500H9.500zM0 10.500h8.500v7.700L0 17zM9.500 10.500H20V20L9.500 18.400z" /></svg>
        </Start>
        <Search>
          <svg width="21" height="21" fill="none" stroke="#1f1f1f" strokeWidth="1.500"><circle cx="13" cy="8" r="6.500" /><path d="m8.500 12.500-7.500 8" /></svg>
          <input placeholder="Type here to search" aria-label="Type here to search" />
          <Board />
        </Search>
        <Apps>
          <AppButton aria-label="Task View">
            <svg width="20" height="20" fill="none" stroke="#fff" strokeWidth="1.200"><path d="M.5 0v3.500h12V0M.5 20v-3.500h12V20M.5 6.500h12v7H.5zM18.500 0v4M18.500 11v9" /><path fill="#fff" d="M17.500 6.500h2v2h-2z" /></svg>
          </AppButton>
          <AppButton aria-label="Chrome"><Chrome /></AppButton>
          <AppButton aria-label="Copilot"><Copilot /></AppButton>
          <AppButton aria-label="Outlook"><Outlook /></AppButton>
          <AppButton aria-label="Edge"><Edge /></AppButton>
          <AppButton aria-label="File Explorer" $state="open"><Explorer /></AppButton>
          <AppButton aria-label="Store"><Store /></AppButton>
          <AppButton aria-label="Chrome windows" $state="many"><Chrome /></AppButton>
          <AppButton aria-label="LibreOffice Calc" $state="active"><CalcIcon w={24} h={30} /></AppButton>
        </Apps>
        <Weather>
          <Moon />
          <span>29°C</span>
          <span>Mostly clear</span>
        </Weather>
        <TrayButton aria-label="Show hidden icons">
          <svg width="16" height="10" fill="none" stroke="#fff" strokeWidth="1.300"><path d="m1 9 7-7.500L15 9" /></svg>
        </TrayButton>
        <TrayButton aria-label="Meet Now">
          <svg width="16" height="20" fill="none" stroke="#fff" strokeWidth="1.200"><path d="M1.500 5.500h9v9h-9zM10.500 8l3.500-2v8l-3.500-2M2 2.500c2-2 7-2 9 0M2 17.500c2 2 7 2 9 0" /></svg>
        </TrayButton>
        <TrayButton aria-label="OneDrive">
          <svg width="22" height="20"><path fill="#d8d2d8" d="M4 13a4 4 0 0 1 0-8 6 6 0 0 1 11-1 5 5 0 0 1 1 9z" /><circle cx="15" cy="13" r="6.500" fill="#4db8f0" /><path fill="#113" d="M14 12h2v5h-2zM14 9h2v2h-2z" /></svg>
        </TrayButton>
        <TrayButton aria-label="Network">
          <svg width="17" height="17" fill="none" stroke="#fff" strokeWidth="1.200"><path d="M1 16C1 8 8 1 16 1M5 16C5 10 10 5 16 5M9 16c0-4 3-7 7-7" /><circle cx="14" cy="14.500" r="1.500" fill="#fff" /></svg>
        </TrayButton>
        <Clock>
          <span>10:41 AM</span>
          <span>10/5/2025</span>
        </Clock>
        <Notify aria-label="1 new notification">
          <svg width="34" height="32" viewBox="0 0 34 32">
            <path fill="#fff" d="M2 1h20v16H12l-4 5v-5H2z" />
            <path stroke="#3e1a30" d="M6 5.500h12M6 9.500h12M6 13.500h8" />
            <circle cx="21" cy="21" r="10" fill="#3c3038" stroke="#8b7f88" />
            <text x="21" y="26" textAnchor="middle" fill="#fff" fontSize="14">1</text>
          </svg>
        </Notify>
        <ShowDesktop aria-label="Show desktop" />
      </TaskBar>
    </Page>
  );
}
